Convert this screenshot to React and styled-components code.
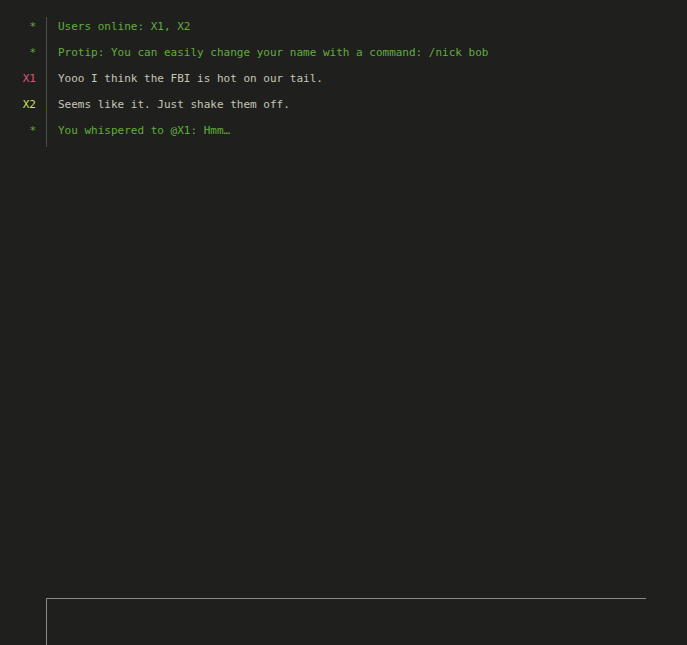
import React from 'react';
import styled, { createGlobalStyle } from 'styled-components';

const GlobalStyle = createGlobalStyle`
  html, body {
    margin: 0;
    padding: 0;
    background: #1f1f1d;
  }
`;

const Page = styled.div`
  height: 100vh;
  display: flex;
  flex-direction: column;
  background: #1f1f1d;
  font-family: "DejaVu Sans Mono", "Liberation Mono", monospace;
  font-size: 11px;
  overflow: hidden;
`;

const Log = styled.div`
  flex: 1;
  padding-top: 17px;
`;

const Row = styled.div`
  display: grid;
  grid-template-columns: 46px 1fr;
`;

const Nick = styled.div`
  text-align: right;
  padding: 2px 10px 8px 0;
  line-height: 16px;
  color: ${p => p.$color};
`;

const Message = styled.div`
  border-left: 1px solid #4e4e48;
  padding: 2px 0 8px 11px;
  line-height: 16px;
  white-space: pre;
  color: ${p => (p.$system ? '#5fae3e' : '#c6c6b8')};
`;

const InputBox = styled.div`
  margin-left: 46px;
  width: 600px;
  height: 47px;
  border-top: 1px solid #8c8c84;
  border-left: 1px solid #8c8c84;
  box-sizing: border-box;
`;

const lines = [
  { nick: '*', color: '#5fae3e', system: true, text: 'Users online: X1, X2' },
  { nick: '*', color: '#5fae3e', system: true, text: 'Protip: You can easily change your name with a command: /nick bob' },
  { nick: 'X1', color: '#e2507a', text: 'Yooo I think the FBI is hot on our tail.' },
  { nick: 'X2', color: '#cde05a', text: 'Seems like it. Just shake them off.' },
  { nick: '*', color: '#5fae3e', system: true, text: 'You whispered to @X1: Hmm…' },
];

const App = () => (
  <Page>
    <GlobalStyle />
    <Log>
      {lines.map((line, i) => (
        <Row key={i}>
          <Nick $color={line.color}>{line.nick}</Nick>
          <Message $system={line.system}>{line.text}</Message>
        </Row>
      ))}
    </Log>
    <InputBox />
  </Page>
);

export default App;
